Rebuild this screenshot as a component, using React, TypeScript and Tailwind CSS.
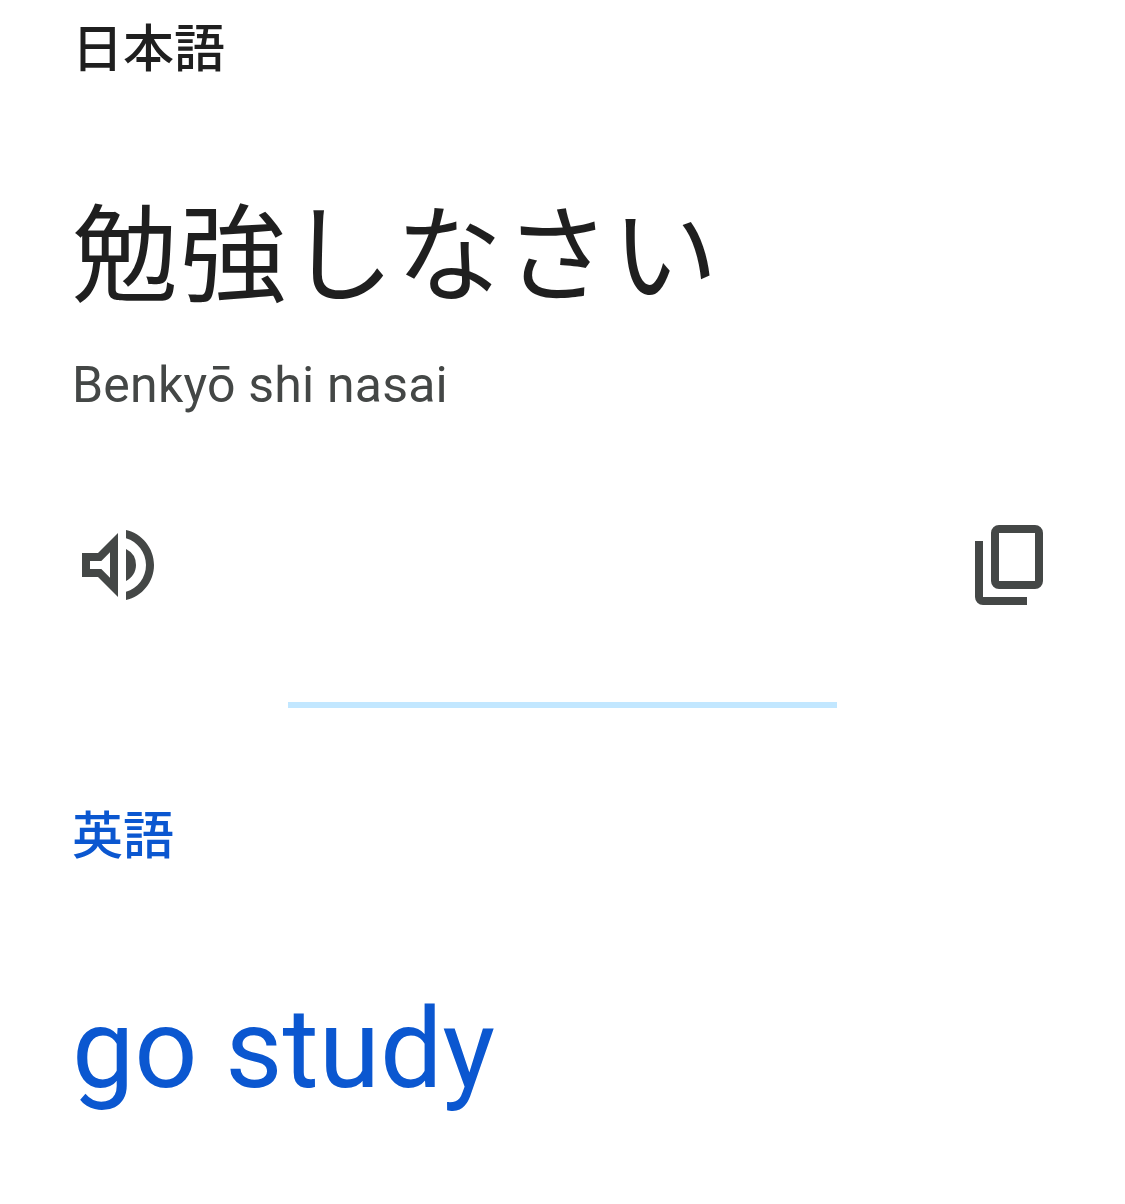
const CJK = `font-['Noto_Sans_CJK_JP','Noto_Sans_CJK_SC',sans-serif]`;

function SpeakerIcon() {
  return (
    <svg viewBox="0 0 24 24" fill="#444746" className="-ml-[2px] h-[96px] w-[96px]">
      <path d="M3 9v6h4l5 5V4L7 9H3zm7-.17v6.34L7.83 13H5v-2h2.83L10 8.83zM16.5 12A4.5 4.5 0 0 0 14 7.97v8.05c1.48-.73 2.5-2.25 2.5-4.02zM14 3.23v2.06c2.89.86 5 3.54 5 6.71s-2.11 5.85-5 6.71v2.06c4.01-.91 7-4.49 7-8.77 0-4.28-2.99-7.86-7-8.77z" />
    </svg>
  );
}

function CopyIcon() {
  return (
    <svg viewBox="0 0 24 24" fill="#444746" className="h-[96px] w-[96px]">
      <path d="M9 18q-.825 0-1.412-.587Q7 16.825 7 16V4q0-.825.588-1.413Q8.175 2 9 2h9q.825 0 1.413.587Q20 3.175 20 4v12q0 .825-.587 1.413Q18.825 18 18 18Zm0-2h9V4H9v12Zm-4 6q-.825 0-1.413-.587Q3 20.825 3 20V6h2v14h11v2Z" />
    </svg>
  );
}

export default function App() {
  return (
    <div className="h-[1204px] w-[1125px] overflow-hidden bg-white pl-[72px] pr-[66px] pt-[15px] font-['Roboto',sans-serif]">
      <div className={`${CJK} text-[51px] font-medium leading-[60px] text-[#1f1f1f]`}>日本語</div>
      <div className={`${CJK} mt-[102px] text-[106px] tracking-[2px] leading-[140px] text-[#1f1f1f]`}>勉強しなさい</div>
      <div className="mt-[38px] text-[50px] tracking-[0.2px] leading-[60px] text-[#444746]">Benkyō shi nasai</div>
      <div className="mt-[102px] flex items-center justify-between">
        <SpeakerIcon />
        <CopyIcon />
      </div>
      <div className="mt-[89px] -ml-[6px] flex justify-center">
        <div className="h-[6px] w-[549px] bg-[#c2e7ff]" />
      </div>
      <div className={`${CJK} mt-[94px] text-[51px] font-medium leading-[60px] text-[#0b57d0]`}>英語</div>
      <div className="mt-[122px] text-[111px] leading-[130px] text-[#0b57d0]">go study</div>
    </div>
  );
}
